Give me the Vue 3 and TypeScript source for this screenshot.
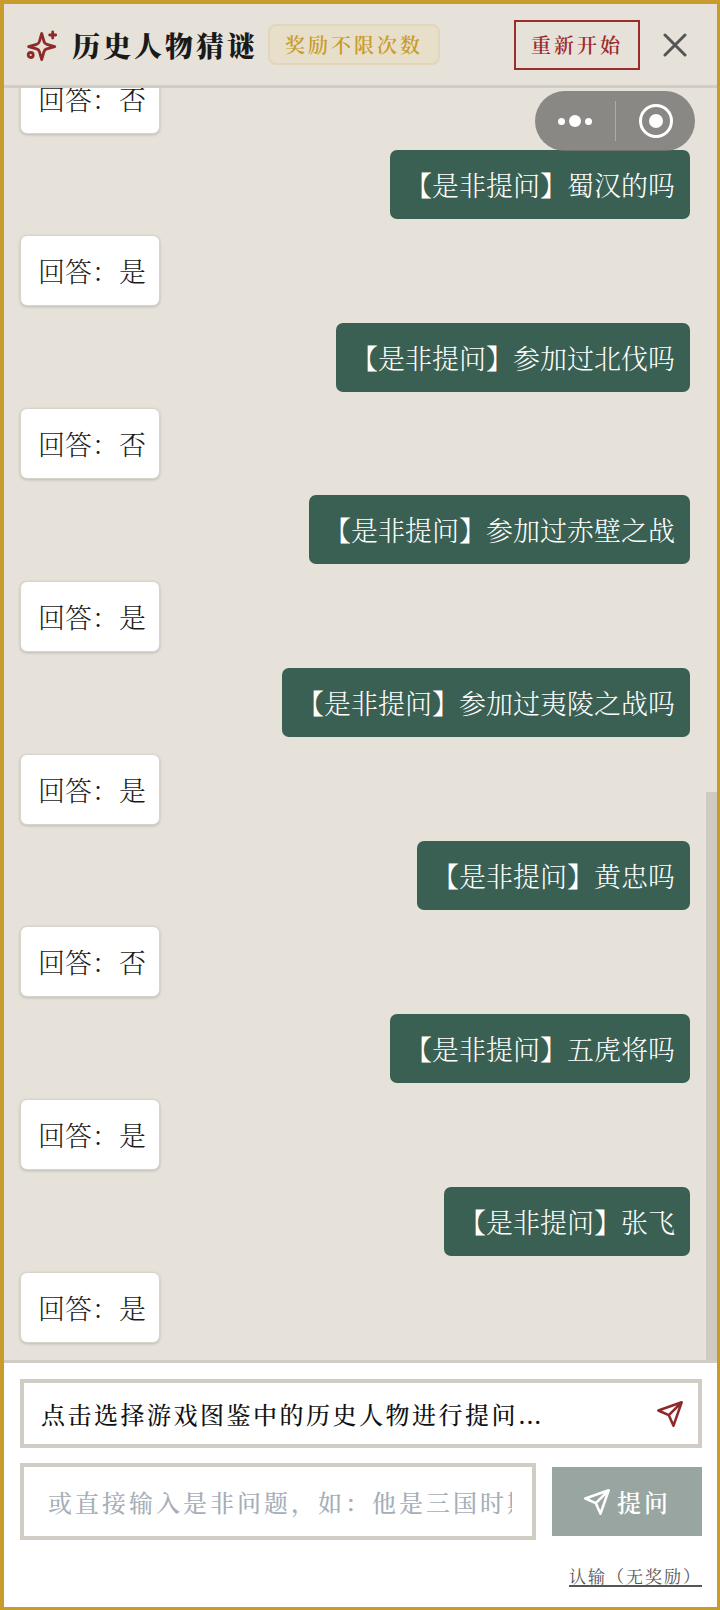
<script setup lang="ts">
const rounds: { q: string; a: string }[] = [
  { q: '蜀汉的吗', a: '是' },
  { q: '参加过北伐吗', a: '否' },
  { q: '参加过赤壁之战', a: '是' },
  { q: '参加过夷陵之战吗', a: '是' },
  { q: '黄忠吗', a: '否' },
  { q: '五虎将吗', a: '是' },
  { q: '张飞', a: '是' },
];
</script>

<template>
  <div class="frame">
    <header class="top">
      <svg class="spark" viewBox="0 0 30 30" fill="none" stroke="#8f2a2a" stroke-width="2.8" stroke-linecap="round" stroke-linejoin="round">
        <path d="M14.7 3.500l2.300 8a4 4 0 0 0 2.800 2.800l8 2.300-8 2.300a4 4 0 0 0-2.800 2.800l-2.300 8-2.300-8a4 4 0 0 0-2.800-2.800l-8-2.300 8-2.300a4 4 0 0 0 2.800-2.800z" />
        <path d="M25.700 2v6M22.700 5h6" />
        <circle cx="3.700" cy="25" r="2.500" />
      </svg>
      <h1 class="title">历史人物猜谜</h1>
      <span class="badge">奖励不限次数</span>
      <button class="restart">重新开始</button>
      <svg class="close" viewBox="0 0 24 24" fill="none" stroke="#555" stroke-width="3" stroke-linecap="round">
        <path d="M2 2l20 20M22 2L2 22" />
      </svg>
    </header>

    <main class="chat">
      <div class="bubble answer">回答：否</div>
      <template v-for="r in rounds" :key="r.q">
        <div class="bubble question">【是非提问】{{ r.q }}</div>
        <div class="bubble answer">回答：{{ r.a }}</div>
      </template>
      <div class="scrollbar"></div>
    </main>

    <footer class="bottom">
      <div class="picker">
        <span>点击选择游戏图鉴中的历史人物进行提问<span class="ell">...</span></span>
        <svg class="send" viewBox="0 0 24 24" fill="none" stroke="#8f2a2a" stroke-width="2.2" stroke-linecap="round" stroke-linejoin="round">
          <path d="M22 2l-7 20-4-9-9-4zM22 2L11 13" />
        </svg>
      </div>
      <div class="ask-row">
        <input class="ask-input" placeholder="或直接输入是非问题，如：他是三国时期的人物吗" />
        <button class="ask-btn">
          <svg class="send" viewBox="0 0 24 24" fill="none" stroke="#fff" stroke-width="2.2" stroke-linecap="round" stroke-linejoin="round">
            <path d="M22 2l-7 20-4-9-9-4zM22 2L11 13" />
          </svg>
          提问
        </button>
      </div>
      <div class="give-up"><a>认输（无奖励）</a></div>
    </footer>

    <div class="capsule">
      <div class="dots"><i></i><i class="big"></i><i></i></div>
      <div class="divider"></div>
      <div class="target"><i></i></div>
    </div>
  </div>
</template>

<style>
html,
body {
  margin: 0;
  background: #fff;
}
</style>

<style scoped>
.frame {
  position: relative;
  box-sizing: border-box;
  width: 720px;
  height: 1610px;
  display: flex;
  flex-direction: column;
  border: 4px solid #c89b2c;
  border-width: 4px 3px 3px 4px;
  font-family: "Noto Serif CJK SC", "Noto Sans CJK SC", serif;
  color: #1a1a1a;
}

.top {
  flex: none;
  box-sizing: border-box;
  height: 84px;
  display: flex;
  align-items: center;
  padding: 0 30px 0 23px;
  background: #e6e2da;
  border-bottom: 3px solid #d1cdc4;
}

.spark {
  width: 30px;
  height: 30px;
  margin-right: 15px;
  overflow: visible;
}

.title {
  margin: 0 10px 0 0;
  font-size: 28px;
  font-weight: 900;
  letter-spacing: 3px;
  white-space: nowrap;
}

.badge {
  box-sizing: border-box;
  height: 41px;
  width: 172px;
  display: flex;
  align-items: center;
  justify-content: center;
  font-size: 20px;
  font-weight: 600;
  letter-spacing: 3px;
  color: #c89b2c;
  background: #e8dfcb;
  border: 2px solid #e2d6ba;
  border-radius: 8px;
}

.restart {
  box-sizing: border-box;
  width: 126px;
  height: 50px;
  margin-left: auto;
  padding: 0;
  font-family: inherit;
  font-size: 20px;
  font-weight: 600;
  letter-spacing: 3px;
  color: #9b2c2c;
  background: transparent;
  border: 2px solid #9b2c2c;
}

.close {
  width: 24px;
  height: 24px;
  margin-left: 23px;
}

.chat {
  position: relative;
  flex: 1;
  min-height: 0;
  display: flex;
  flex-direction: column;
  justify-content: flex-end;
  align-items: flex-start;
  gap: 16.4px;
  overflow: hidden;
  padding: 0 27px 17px 16px;
  background: #e6e2da;
}

.bubble {
  flex: none;
  box-sizing: border-box;
  font-size: 27px;
  font-weight: 300;
  line-height: 39px;
  white-space: nowrap;
}

.answer {
  padding: 15px 17px;
  width: 140px;
  background: #fff;
  border: 1px solid #d8d4cc;
  border-radius: 7px;
  box-shadow: 0 1px 3px rgba(0, 0, 0, 0.18);
}

.question {
  align-self: flex-end;
  padding: 15px;
  color: #fff;
  background: #3a5f53;
  border-radius: 7px;
}

.scrollbar {
  position: absolute;
  top: 704px;
  right: 0;
  bottom: 0;
  width: 11px;
  background: #cfcbc3;
}

.bottom {
  flex: none;
  box-sizing: border-box;
  height: 247px;
  padding: 16px 15px 0 16px;
  background: #fff;
  border-top: 3px solid #d1cdc4;
}

.picker {
  box-sizing: border-box;
  height: 69px;
  display: flex;
  align-items: center;
  justify-content: space-between;
  padding: 0 14px 0 17px;
  border: 4px solid #d1cdc4;
  font-size: 24px;
  font-weight: 500;
  letter-spacing: 2.5px;
  color: #111;
}

.ell {
  letter-spacing: 0;
}

.send {
  flex: none;
  width: 28px;
  height: 28px;
}

.ask-row {
  display: flex;
  align-items: center;
  gap: 16px;
  margin-top: 15px;
}

.ask-input {
  box-sizing: border-box;
  width: 516px;
  height: 77px;
  padding: 0 20px 0 24px;
  font-family: inherit;
  font-size: 24px;
  font-weight: 500;
  letter-spacing: 3px;
  background: #fff;
  border: 4px solid #d1cdc4;
  border-radius: 0;
  outline: none;
}

.ask-input::placeholder {
  color: #a6aeb8;
}

.ask-btn {
  box-sizing: border-box;
  width: 150px;
  height: 69px;
  display: flex;
  align-items: center;
  justify-content: center;
  gap: 6px;
  padding: 0;
  font-family: inherit;
  font-size: 24px;
  font-weight: 600;
  letter-spacing: 3px;
  color: #fff;
  background: #98a5a0;
  border: none;
}

.give-up {
  margin-top: 27px;
  text-align: right;
  font-size: 17px;
  line-height: 18px;
  letter-spacing: 2px;
  color: #555;
}

.give-up a {
  display: inline-block;
  border-bottom: 2px solid #555;
}

.capsule {
  position: absolute;
  top: 87px;
  left: 531px;
  box-sizing: border-box;
  width: 160px;
  height: 60px;
  display: flex;
  align-items: center;
  background: rgba(120, 120, 116, 0.85);
  border-radius: 30px;
}

.dots {
  width: 80px;
  display: flex;
  align-items: center;
  justify-content: center;
  gap: 4px;
}

.dots i {
  width: 7px;
  height: 7px;
  background: #fff;
  border-radius: 50%;
}

.dots i.big {
  width: 12px;
  height: 12px;
}

.divider {
  width: 1px;
  height: 40px;
  background: rgba(255, 255, 255, 0.3);
}

.target {
  box-sizing: border-box;
  width: 34px;
  height: 34px;
  margin-left: 23px;
  display: flex;
  align-items: center;
  justify-content: center;
  border: 3px solid #fff;
  border-radius: 50%;
}

.target i {
  width: 14px;
  height: 14px;
  background: #fff;
  border-radius: 50%;
}
</style>
